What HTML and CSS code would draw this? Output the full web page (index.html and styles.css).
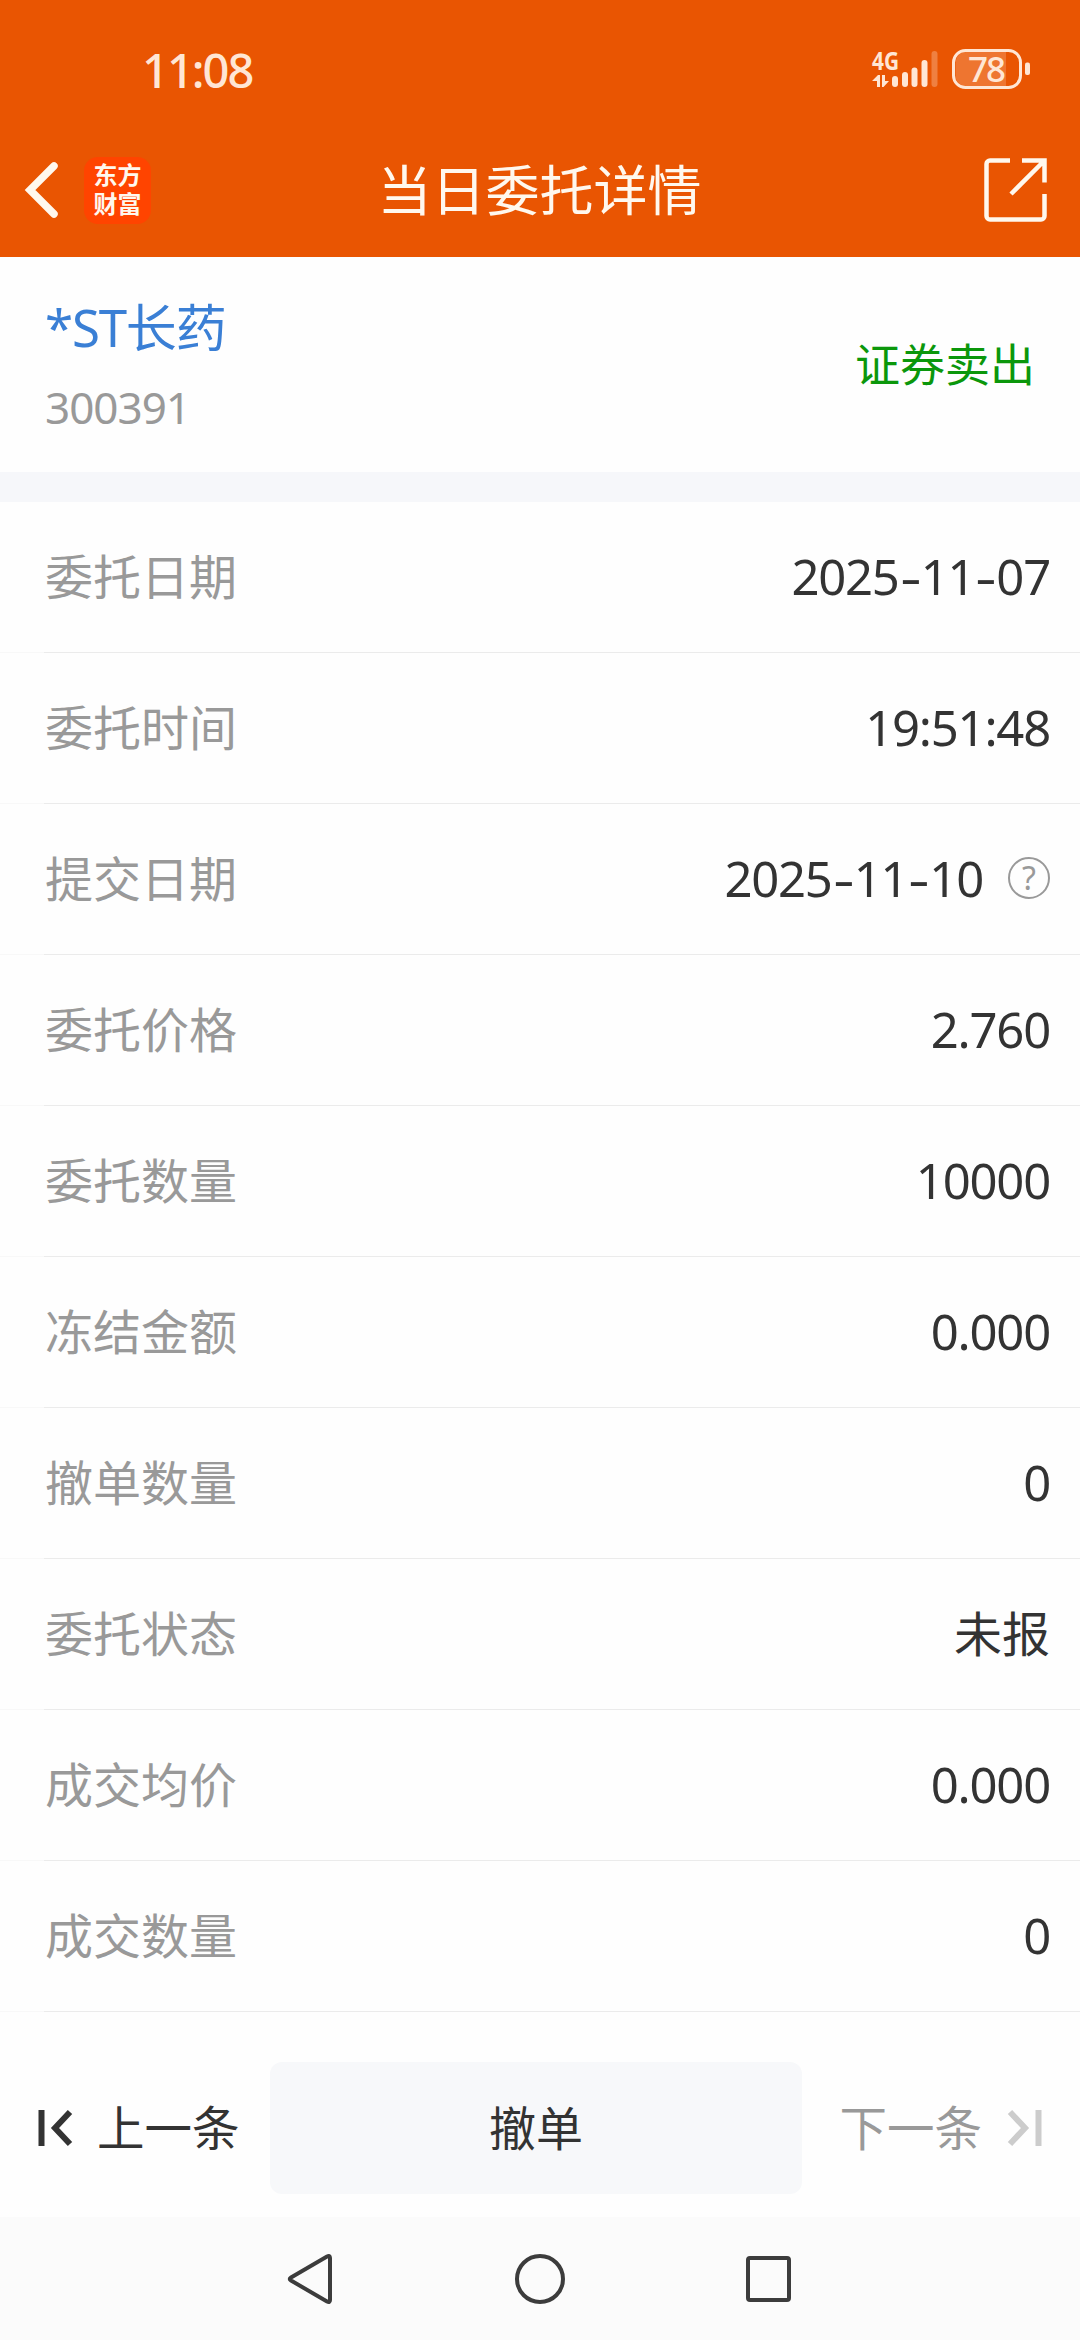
FILE: index.html
```html
<!DOCTYPE html>
<html lang="zh-CN">
<head>
<meta charset="utf-8"/>
<title>当日委托详情</title>
<meta name="viewport" content="width=device-width">
<link rel="stylesheet" href="styles.css">
</head>
<body>
<header>
	<div class="status">
		<span class="clock">11:08</span>
		<div class="indicators">
			<svg class="signal" width="68" height="40" viewBox="0 0 68 40">
				<text x="0" y="20.500" textLength="27" lengthAdjust="spacingAndGlyphs">4G</text>
				<path d="M0 32L6 26H8V38H5V32ZM10 26H13V32H17L11.500 38H10Z"/>
				<rect x="20" y="27" width="6" height="11" rx="3"/>
				<rect x="30" y="23" width="6" height="15" rx="3"/>
				<rect x="39.500" y="18.500" width="6" height="19.500" rx="3"/>
				<rect x="49.500" y="11" width="6" height="27" rx="3"/>
				<rect class="weak" x="59.500" y="2" width="6" height="36" rx="3"/>
			</svg>
			<svg class="battery" width="80" height="40" viewBox="0 0 80 40">
				<path class="level" d="M14 3H54V37H14A10.500 10.500 0 0 1 3.500 26.500V13.500A10.500 10.500 0 0 1 14 3Z"/>
				<rect class="shell" x="1.500" y="1.500" width="67" height="37" rx="12"/>
				<rect x="73" y="13.500" width="5" height="12.500" rx="2"/>
				<text x="16" y="32.500" textLength="38">78</text>
			</svg>
		</div>
	</div>
	<nav class="titlebar">
		<a class="back">
			<svg width="34" height="58" viewBox="0 0 34 58"><path d="M29 5L5 29L29 53"/></svg>
		</a>
		<div class="logo">东方<br>财富</div>
		<h1>当日委托详情</h1>
		<a class="share">
			<svg width="64" height="64" viewBox="0 0 64 64"><path d="M26 2.500H6A3.500 3.500 0 0 0 2.500 6V58A3.500 3.500 0 0 0 6 61.500H57A3.500 3.500 0 0 0 60.500 58V36M38 2.500H60.500V24.500M60 3L27 36"/></svg>
		</a>
	</nav>
</header>
<section class="stock">
	<div>
		<div class="name">*ST长药</div>
		<div class="code">300391</div>
	</div>
	<div class="side">证券卖出</div>
</section>
<dl class="detail">
	<div class="row"><dt>委托日期</dt><dd>2025<i>-</i>11<i>-</i>07</dd></div>
	<div class="row"><dt>委托时间</dt><dd>19:51:48</dd></div>
	<div class="row">
		<dt>提交日期</dt>
		<dd>2025<i>-</i>11<i>-</i>10<span class="help">?</span></dd>
	</div>
	<div class="row"><dt>委托价格</dt><dd>2.760</dd></div>
	<div class="row"><dt>委托数量</dt><dd>10000</dd></div>
	<div class="row"><dt>冻结金额</dt><dd>0.000</dd></div>
	<div class="row"><dt>撤单数量</dt><dd>0</dd></div>
	<div class="row"><dt>委托状态</dt><dd class="word">未报</dd></div>
	<div class="row"><dt>成交均价</dt><dd>0.000</dd></div>
	<div class="row"><dt>成交数量</dt><dd>0</dd></div>
</dl>
<footer class="actions">
	<a class="prev">
		<svg width="36" height="36" viewBox="0 0 36 36"><path d="M3.500 0V36M32 2L17 18L32 34"/></svg>
		上一条
	</a>
	<button>撤单</button>
	<a class="next">
		下一条
		<svg width="36" height="36" viewBox="0 0 36 36"><path d="M32.500 0V36M4 2L19 18L4 34"/></svg>
	</a>
</footer>
<nav class="system">
	<svg width="54" height="54" viewBox="0 0 54 54"><path d="M43 4.500Q46 3 46 6V48Q46 51 43 49.500L7 28.500Q4.500 27 7 25.500Z"/></svg>
	<svg width="54" height="54" viewBox="0 0 54 54"><circle cx="27" cy="27" r="23"/></svg>
	<svg width="54" height="54" viewBox="0 0 54 54"><rect x="6" y="6" width="41" height="42" rx="2"/></svg>
</nav>
</body>
</html>
```
FILE: styles.css
```css
* {
	box-sizing:border-box;
}
body {
	margin:0;
	min-height:2340px;
	display:flex;
	flex-direction:column;
	background:#fefefe;
	color:#333;
	font:400 48px/1 "Noto Sans","Noto Sans CJK SC",sans-serif;
}
svg {
	display:block;
	flex:none;
	overflow:visible;
	fill:none;
	stroke:currentColor;
}

/* header */
header {
	height:257px;
	background:#e95502;
	color:#fff8ee;
}
.status {
	height:123px;
	padding:49px 48px 0 142px;
	display:flex;
	justify-content:space-between;
	align-items:flex-start;
	color:#ffe6d4;
}
.clock {
	font-size:47px;
	line-height:42px;
	font-weight:500;
	letter-spacing:-2px;
}
.indicators {
	display:flex;
	gap:12px;
}
.indicators svg {
	fill:currentColor;
	stroke:none;
}
.signal text {
	font-size:25.500px;
	font-weight:700;
}
.signal .weak {
	opacity:.3;
}
.battery text {
	font-size:35px;
	font-weight:500;
}
.battery .level {
	opacity:.22;
}
.battery .shell {
	fill:none;
	stroke:currentColor;
	stroke-width:3;
}
.titlebar {
	height:134px;
	padding:0 32px 0 25px;
	display:grid;
	grid-template-columns:59px 67px 1fr 120px;
	align-items:center;
}
.back svg {
	stroke-width:7.500;
	stroke-linecap:round;
}
.logo {
	width:67px;
	height:67px;
	border-radius:14px;
	background:#ff4400;
	padding-top:2px;
	text-align:center;
	font:700 24px/29px "Noto Sans CJK SC",sans-serif;
}
h1 {
	margin:0;
	text-align:center;
	font-size:54px;
	line-height:60px;
	font-weight:400;
}
.share {
	justify-self:end;
}
.share svg {
	stroke-width:4.500;
}

/* stock */
.stock {
	height:215px;
	padding:40px 45px 0;
	display:flex;
	justify-content:space-between;
}
.name {
	color:#3a7fd5;
	font-size:51px;
	line-height:60px;
	letter-spacing:-1.2px;
}
.code {
	margin-top:20px;
	color:#999;
	font-size:44px;
	line-height:60px;
	letter-spacing:-1px;
}
.side {
	margin-top:38px;
	color:#0b970b;
	font-size:45px;
	line-height:60px;
}

/* order detail */
.detail {
	margin:0;
	border-top:30px solid #f6f7fa;
}
.row {
	height:151px;
	padding:0 30px 0 45px;
	display:flex;
	justify-content:space-between;
	align-items:center;
	border-bottom:1px solid;
	border-image:linear-gradient(90deg,#f8f8f8 45px,#ebebeb 45px) 1;
}
dt {
	color:#999;
}
dd {
	margin:0;
	padding-bottom:2px;
	display:flex;
	align-items:center;
	font-size:49px;
	letter-spacing:-1.2px;
}
dd.word {
	padding-bottom:0;
	font-size:48px;
	letter-spacing:0;
}
dd i {
	width:22px;
	font-style:normal;
	text-align:center;
	transform:scaleX(1.35);
}
.help {
	width:42px;
	height:42px;
	margin-left:25px;
	border:2px solid #999;
	border-radius:50%;
	color:#999;
	text-align:center;
	font-size:32px;
	line-height:38px;
	letter-spacing:0;
}

/* bottom bar */
.actions {
	height:205px;
	padding:50px 38px 0;
	display:grid;
	grid-template-columns:232px 532px 1fr;
	align-items:start;
}
.actions a {
	height:132px;
	display:flex;
	align-items:center;
	font-size:47.500px;
}
.actions svg {
	stroke-width:6;
}
.prev {
	gap:23px;
}
.next {
	justify-content:flex-end;
	gap:24px;
	color:#999;
}
.next svg {
	color:#ccc;
}
button {
	height:132px;
	border:0;
	border-radius:12px;
	background:#f7f8fa;
	color:#333;
	font:inherit;
	font-size:47px;
}
.system {
	height:123px;
	display:flex;
	justify-content:center;
	align-items:center;
	gap:175px;
	background:#fbfbfb;
	color:#3c3c3c;
}
.system svg {
	stroke-width:4;
}
```
